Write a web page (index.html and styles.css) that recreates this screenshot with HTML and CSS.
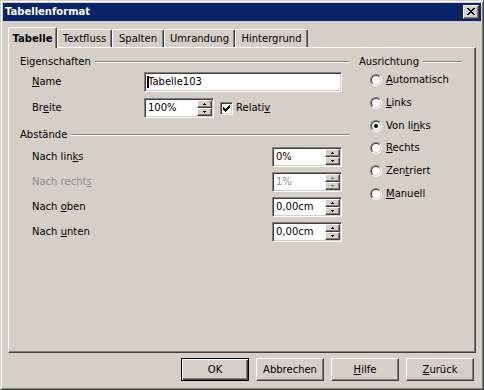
FILE: index.html
```html
<!DOCTYPE html>
<html lang="de">
<head>
<meta charset="utf-8">
<title>Tabellenformat</title>
<link rel="stylesheet" href="styles.css">
</head>
<body>
<div class="window">
  <div class="titlebar">
    <span class="title">Tabellenformat</span>
    <span class="close"><svg width="8" height="7" viewBox="0 0 8 7" shape-rendering="crispEdges"><path fill="#000" d="M0 0h2v1H0zM6 0h2v1H6zM1 1h2v1H1zM5 1h2v1H5zM2 2h4v1H2zM3 3h2v1H3zM2 4h4v1H2zM1 5h2v1H1zM5 5h2v1H5zM0 6h2v1H0zM6 6h2v1H6z"/></svg></span>
  </div>
  <div class="client">
    <div class="tabs">
      <div class="tab active t-tabelle">Tabelle</div>
      <div class="tab t-textfluss">Textfluss</div>
      <div class="tab t-spalten">Spalten</div>
      <div class="tab t-umrandung">Umrandung</div>
      <div class="tab t-hintergrund">Hintergrund</div>
    </div>
    <div class="panel">
      <div class="col-left">
        <div class="ghead"><span>Eigenschaften</span><span class="etch"></span></div>
        <div class="rows rows-top">
          <div class="row">
            <span class="lbl"><u>N</u>ame</span>
            <span class="field f-name"><span class="caret"></span><span class="val">Tabelle103</span></span>
          </div>
          <div class="row">
            <span class="lbl">Br<u>e</u>ite</span>
            <span class="field f-spin"><span class="val">100%</span><span class="spinbtns"><span class="sb up"></span><span class="sb down"></span></span></span>
            <span class="check"><svg width="7" height="7" viewBox="0 0 7 7" shape-rendering="crispEdges"><path fill="#000" d="M6 0h1v1H6zM5 1h2v1H5zM0 2h1v1H0zM4 2h3v1H4zM0 3h2v1H0zM3 3h3v1H3zM0 4h5v1H0zM1 5h3v1H1zM2 6h1v1H2z"/></svg></span>
            <span class="checklbl">Relati<u>v</u></span>
          </div>
        </div>
        <div class="ghead ghead-2"><span>Abstände</span><span class="etch"></span></div>
        <div class="rows rows-bottom">
          <div class="row">
            <span class="lbl lbl-wide">Nach lin<u>k</u>s</span>
            <span class="field f-spin"><span class="val">0%</span><span class="spinbtns"><span class="sb up"></span><span class="sb down"></span></span></span>
          </div>
          <div class="row disabled">
            <span class="lbl lbl-wide">Nach recht<u>s</u></span>
            <span class="field f-spin"><span class="val">1%</span><span class="spinbtns"><span class="sb up"></span><span class="sb down"></span></span></span>
          </div>
          <div class="row">
            <span class="lbl lbl-wide">Nach <u>o</u>ben</span>
            <span class="field f-spin"><span class="val">0,00cm</span><span class="spinbtns"><span class="sb up"></span><span class="sb down"></span></span></span>
          </div>
          <div class="row">
            <span class="lbl lbl-wide">Nach <u>u</u>nten</span>
            <span class="field f-spin"><span class="val">0,00cm</span><span class="spinbtns"><span class="sb up"></span><span class="sb down"></span></span></span>
          </div>
        </div>
      </div>
      <div class="col-right">
        <div class="ghead"><span>Ausrichtung</span><span class="etch"></span></div>
        <div class="radios">
          <div class="radio-row"><span class="radio"></span><span><u>A</u>utomatisch</span></div>
          <div class="radio-row"><span class="radio"></span><span><u>L</u>inks</span></div>
          <div class="radio-row"><span class="radio checked"></span><span>Von li<u>n</u>ks</span></div>
          <div class="radio-row"><span class="radio"></span><span><u>R</u>echts</span></div>
          <div class="radio-row"><span class="radio"></span><span>Zen<u>t</u>riert</span></div>
          <div class="radio-row"><span class="radio"></span><span><u>M</u>anuell</span></div>
        </div>
      </div>
    </div>
    <div class="buttons">
      <span class="btn default">OK</span>
      <span class="btn">Abbrechen</span>
      <span class="btn"><u>H</u>ilfe</span>
      <span class="btn"><u>Z</u>urück</span>
    </div>
  </div>
</div>
</body>
</html>
```

FILE: styles.css
```css
* { box-sizing: border-box; }
html, body { margin: 0; padding: 0; }
body {
  width: 484px;
  height: 390px;
  overflow: hidden;
  background: #D4D0C8;
  font-family: "DejaVu Sans", "Liberation Sans", sans-serif;
  font-size: 10px;
  line-height: 12px;
  color: #000;
}
u { text-decoration: underline; text-underline-offset: 1px; }

.window {
  width: 484px;
  height: 390px;
  border: 1px solid;
  border-color: #D4D0C8 #404040 #404040 #D4D0C8;
  box-shadow: inset 1px 1px #fff, inset -1px -1px #808080;
  padding: 2px;
  display: flex;
  flex-direction: column;
  background: #D4D0C8;
}
.titlebar {
  height: 18px;
  flex: none;
  background: #0A246A;
  display: flex;
  align-items: center;
  justify-content: space-between;
  padding: 0 2px;
}
.title { color: #fff; font-weight: bold; }
.close {
  width: 16px;
  height: 14px;
  background: #D4D0C8;
  border: 1px solid;
  border-color: #fff #404040 #404040 #fff;
  box-shadow: inset -1px -1px #808080;
  display: flex;
  align-items: center;
  justify-content: center;
  padding: 0 1px 1px 0;
}
.close svg { display: block; }

.client { padding: 6px 5px 0 5px; }

.tabs { display: flex; align-items: flex-end; height: 20px; }
.tab {
  height: 18px;
  padding-top: 3px;
  text-align: center;
  border-top: 1px solid #fff;
  border-left: 1px solid #fff;
  border-right: 1px solid #404040;
  box-shadow: inset -1px 0 #808080;
  border-radius: 2px 2px 0 0;
  white-space: nowrap;
}
.tab.active {
  height: 21px;
  margin-bottom: -1px;
  padding-top: 5px;
  font-weight: bold;
  position: relative;
  z-index: 1;
  background: #D4D0C8;
}
.t-tabelle { width: 49px; }
.t-textfluss { width: 55px; }
.t-spalten { width: 52px; }
.t-umrandung { width: 71px; }
.t-hintergrund { width: 73px; }

.panel {
  height: 306px;
  border: 1px solid;
  border-color: #fff #404040 #404040 #fff;
  box-shadow: inset -1px -1px #808080;
  padding: 8px 13px 0 11px;
  display: grid;
  grid-template-columns: 329px 103px;
  column-gap: 10px;
  align-items: start;
}

.ghead { display: flex; align-items: center; height: 12px; white-space: nowrap; }
.etch {
  flex: 1;
  height: 2px;
  border-top: 1px solid #808080;
  border-bottom: 1px solid #fff;
  margin-left: 4px;
}
.ghead-2 { margin-top: 11px; }

.rows { display: flex; flex-direction: column; }
.rows-top { margin-top: 4px; gap: 6px; }
.rows-bottom { margin-top: 6px; gap: 5px; }
.row { display: flex; align-items: center; height: 20px; }
.lbl { width: 124px; padding-left: 12px; flex: none; }
.lbl-wide { width: 252px; }

.field {
  height: 20px;
  background: #fff;
  border: 1px solid;
  border-color: #808080 #fff #fff #808080;
  box-shadow: inset 1px 1px #404040, inset -1px -1px #D4D0C8;
  display: flex;
  align-items: stretch;
  position: relative;
  flex: none;
}
.f-name { width: 198px; }
.f-spin { width: 70px; }
.val { flex: 1; padding-left: 3px; line-height: 18px; white-space: nowrap; }
.caret {
  position: absolute;
  left: 2px;
  top: 3px;
  width: 2px;
  height: 12px;
  background: #000;
}

.spinbtns {
  width: 15px;
  display: flex;
  flex-direction: column;
  margin: 1px 1px 1px 0;
}
.sb {
  flex: 1;
  background: #D4D0C8;
  border: 1px solid;
  border-color: #fff #404040 #404040 #fff;
  box-shadow: inset -1px -1px #808080;
  display: flex;
  align-items: center;
  justify-content: center;
}
.sb::before {
  content: "";
  width: 1px;
  height: 1px;
  background: #000;
}
.sb.up::before {
  margin-top: -1px;
  box-shadow: -1px 1px #000, 0 1px #000, 1px 1px #000;
}
.sb.down::before {
  margin-top: 1px;
  box-shadow: -1px -1px #000, 0 -1px #000, 1px -1px #000;
}
.disabled .lbl, .disabled .val { color: #8f8f8f; }
.disabled .sb::before { background: #808080; }
.disabled .sb.up::before { box-shadow: -1px 1px #808080, 0 1px #808080, 1px 1px #808080; }
.disabled .sb.down::before { box-shadow: -1px -1px #808080, 0 -1px #808080, 1px -1px #808080; }

.check {
  width: 13px;
  height: 13px;
  margin-left: 6px;
  background: #fff;
  border: 1px solid;
  border-color: #808080 #fff #fff #808080;
  box-shadow: inset 1px 1px #404040, inset -1px -1px #D4D0C8;
  display: flex;
  align-items: center;
  justify-content: center;
  flex: none;
}
.check svg { display: block; }
.checklbl { margin-left: 3px; }

.radios { margin-top: 1px; }
.radio-row {
  height: 22.7px;
  display: flex;
  align-items: center;
  padding-left: 11px;
  white-space: nowrap;
}
.radio {
  width: 12px;
  height: 12px;
  border-radius: 50%;
  border: 1px solid;
  border-color: #808080 #fff #fff #808080;
  position: relative;
  margin-right: 4px;
  flex: none;
}
.radio::before {
  content: "";
  position: absolute;
  inset: 0;
  border-radius: 50%;
  border: 1px solid;
  border-color: #404040 #D4D0C8 #D4D0C8 #404040;
  background: #fff;
}
.radio.checked::after {
  content: "";
  position: absolute;
  left: 3px;
  top: 3px;
  width: 4px;
  height: 4px;
  border-radius: 50%;
  background: #000;
}

.buttons {
  display: flex;
  justify-content: flex-end;
  gap: 7px;
  margin-top: 5px;
  padding-right: 2px;
}
.btn {
  width: 68px;
  height: 23px;
  display: flex;
  align-items: center;
  justify-content: center;
  border: 1px solid;
  border-color: #fff #404040 #404040 #fff;
  box-shadow: inset -1px -1px #808080;
}
.btn.default {
  border-color: #000;
  box-shadow: inset 1px 1px #fff, inset -1px -1px #404040, inset -2px -2px #808080;
}
```
